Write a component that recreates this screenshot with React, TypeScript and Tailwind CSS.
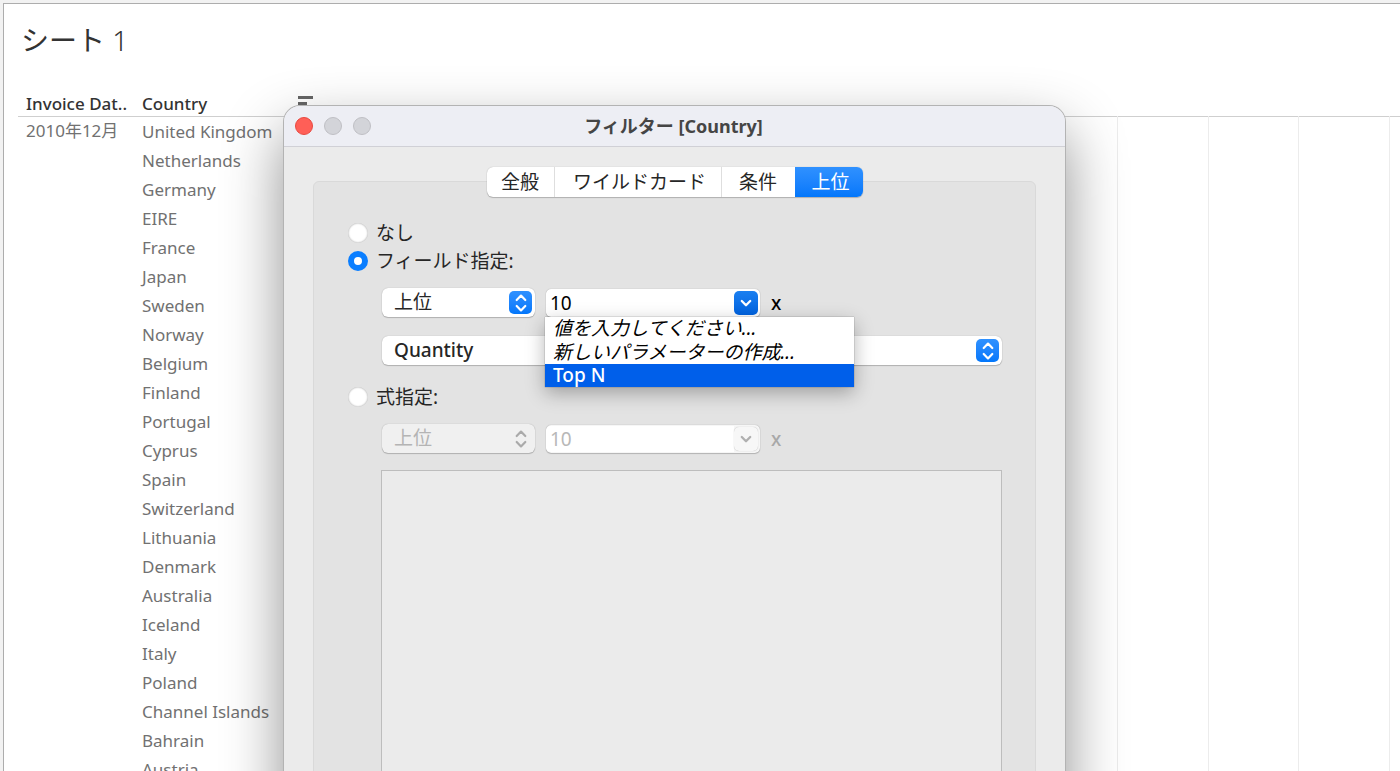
import { useState } from "react";
import type { ReactNode } from "react";
import clsx from "clsx";

const countries = [
  "United Kingdom",
  "Netherlands",
  "Germany",
  "EIRE",
  "France",
  "Japan",
  "Sweden",
  "Norway",
  "Belgium",
  "Finland",
  "Portugal",
  "Cyprus",
  "Spain",
  "Switzerland",
  "Lithuania",
  "Denmark",
  "Australia",
  "Iceland",
  "Italy",
  "Poland",
  "Channel Islands",
  "Bahrain",
  "Austria",
];

const gridColumns = Array.from({ length: 12 }, (_, index) => index);

const tabs = [
  { label: "全般", width: "w-[67px]" },
  { label: "ワイルドカード", width: "w-[167px] pl-1" },
  { label: "条件", width: "w-[74px]" },
  { label: "上位", width: "w-[68px] pl-1" },
];

function SortIcon() {
  return (
    <svg width="15" height="16" viewBox="0 0 15 16" aria-hidden="true">
      <path d="M0 0h15v3H0zM0 6h9v3H0zM0 12h5v3H0z" fill="#666" />
    </svg>
  );
}

function UpDownIcon() {
  return (
    <svg width="14" height="20" viewBox="0 0 14 20" fill="none" stroke="currentColor" strokeWidth="2.2" strokeLinecap="round" strokeLinejoin="round" aria-hidden="true">
      <path d="M2.7 7 7 2.6 11.3 7M2.7 13 7 17.4 11.3 13" />
    </svg>
  );
}

function ChevronIcon() {
  return (
    <svg width="14" height="14" viewBox="0 0 14 14" fill="none" stroke="currentColor" strokeWidth="2.3" strokeLinecap="round" strokeLinejoin="round" aria-hidden="true">
      <path d="M2.8 5 7 9.2 11.2 5" />
    </svg>
  );
}

function PopUp({ label, value, className, disabled = false }: { label: string; value: string; className: string; disabled?: boolean }) {
  return (
    <div className={clsx("relative", className)}>
      <select
        aria-label={label}
        disabled={disabled}
        className={clsx(
          "block h-[29px] w-full appearance-none rounded-md pr-8 pl-3 leading-[29px] opacity-100 shadow-[0_0_1px_rgba(0,0,0,0.3),0_1px_1px_rgba(0,0,0,0.2)]",
          disabled ? "bg-[#f0f0f0] text-[#b4b4b4]" : "bg-white text-[#262626]",
        )}
      >
        <option>{value}</option>
      </select>
      <span
        className={clsx(
          "pointer-events-none absolute top-[3px] right-[3px] flex h-[23px] w-[23px] items-center justify-center rounded-[5px]",
          disabled ? "text-[#aaa]" : "bg-linear-to-b from-[#2f91ff] to-[#0277fb] text-white",
        )}
      >
        <UpDownIcon />
      </span>
    </div>
  );
}

function ComboBox({ label, disabled = false, children }: { label: string; disabled?: boolean; children?: ReactNode }) {
  return (
    <div
      className={clsx(
        "relative mt-px flex h-7 w-[214px] items-center rounded-[5px] pr-[2px] shadow-[0_0_1px_rgba(0,0,0,0.35),0_1px_1px_rgba(0,0,0,0.18)]",
        disabled ? "bg-[#f6f6f6]" : "bg-white",
      )}
    >
      <input
        type="text"
        aria-label={label}
        defaultValue="10"
        disabled={disabled}
        className={clsx("h-[26px] min-w-0 flex-1 rounded-l-[5px] bg-white pl-1 outline-none", disabled ? "text-[#b8b8b8]" : "text-black")}
      />
      <button
        type="button"
        aria-label={`${label}の候補`}
        disabled={disabled}
        className={clsx(
          "flex h-6 w-6 items-center justify-center rounded-[5px]",
          disabled ? "bg-[#f7f7f7] text-[#b0b0b0] shadow-[0_0_1px_rgba(0,0,0,0.3)]" : "bg-linear-to-b from-[#1a7ff0] to-[#0263e0] text-white",
        )}
      >
        <ChevronIcon />
      </button>
      {children}
    </div>
  );
}

function Radio({ label, checked, onSelect }: { label: string; checked: boolean; onSelect: () => void }) {
  return (
    <label className="flex h-7 items-center gap-2">
      <input
        type="radio"
        name="limit"
        checked={checked}
        onChange={onSelect}
        className="h-5 w-5 appearance-none rounded-full bg-white shadow-[inset_0_0_2px_rgba(0,0,0,0.4)] checked:border-[6px] checked:border-[#0a7eff] checked:shadow-none"
      />
      {label}
    </label>
  );
}

function SuggestionMenu() {
  return (
    <ul
      role="listbox"
      aria-label="候補"
      className="absolute top-7 -left-px z-20 w-[309px] bg-white text-black shadow-[0_0_1px_rgba(0,0,0,0.5),0_6px_18px_rgba(0,0,0,0.3)]"
    >
      <li role="option" aria-selected="false" className="h-[23px] pl-2 leading-[23px] italic">
        値を入力してください...
      </li>
      <li role="option" aria-selected="false" className="h-6 pl-2 leading-6 italic">
        新しいパラメーターの作成...
      </li>
      <li role="option" aria-selected="true" className="h-[23px] bg-[#005fea] pl-2 leading-[23px] font-medium text-white">
        Top N
      </li>
    </ul>
  );
}

function FilterDialog() {
  const [tab, setTab] = useState(3);
  const [mode, setMode] = useState("field");

  return (
    <section
      role="dialog"
      aria-labelledby="dialog-title"
      className="absolute top-[106px] left-[284px] flex h-[900px] w-[781px] flex-col rounded-t-2xl bg-[#ebebeb] font-['Noto_Sans','Noto_Sans_CJK_JP',sans-serif] text-[19px] text-[#262626] shadow-[0_0_0_1px_#b3b3b3,0_26px_60px_rgba(0,0,0,0.45)]"
    >
      <header className="flex h-[41px] shrink-0 items-center rounded-t-2xl border-b border-[#d0d0d6] bg-[#edeef4] pr-[13px] pl-[11px]">
        <div className="flex flex-1 gap-[11px]">
          <button type="button" aria-label="閉じる" className="h-[18px] w-[18px] rounded-full border border-[#e8483f] bg-[#ff5f57]" />
          <button type="button" aria-label="最小化" disabled className="h-[18px] w-[18px] rounded-full border border-[#bfbfc4] bg-[#d3d4d9]" />
          <button type="button" aria-label="拡大" disabled className="h-[18px] w-[18px] rounded-full border border-[#bfbfc4] bg-[#d3d4d9]" />
        </div>
        <h2 id="dialog-title" className="pb-px text-lg font-bold text-[#454545]">
          フィルター [Country]
        </h2>
        <div className="flex-1" />
      </header>

      <div className="flex flex-1 flex-col px-[29px] pt-5">
        <div role="tablist" className="relative z-10 -mb-4 flex h-[30px] self-center overflow-hidden rounded-md bg-white shadow-[0_0_1px_rgba(0,0,0,0.3),0_1px_1px_rgba(0,0,0,0.2)]">
          {tabs.map((item, index) => (
            <button
              key={item.label}
              type="button"
              role="tab"
              aria-selected={tab === index}
              onClick={() => setTab(index)}
              className={clsx(
                "h-full",
                item.width,
                index > 0 && index !== tab && "border-l border-[#dedede]",
                tab === index && "bg-linear-to-b from-[#2f91ff] to-[#0277fb] text-white",
              )}
            >
              {item.label}
            </button>
          ))}
        </div>

        <div role="tabpanel" className="flex flex-1 flex-col rounded-t-md border border-[#d9d9d9] bg-[#e3e3e3] pt-[37px] pr-[33px] pl-[34px]">
          <Radio label="なし" checked={mode === "none"} onSelect={() => setMode("none")} />
          <Radio label="フィールド指定:" checked={mode === "field"} onSelect={() => setMode("field")} />

          <div className="mt-[13px] flex flex-col gap-[18px] pl-[34px]">
            <div className="flex">
              <PopUp label="方向" value="上位" className="mr-[11px] w-[153px]" />
              <ComboBox label="件数">
                <SuggestionMenu />
              </ComboBox>
              <span className="ml-[11px] leading-[30px] font-medium text-black">x</span>
            </div>
            <PopUp label="フィールド" value="Quantity" className="w-full font-medium" />
          </div>

          <div className="mt-[18px]">
            <Radio label="式指定:" checked={mode === "formula"} onSelect={() => setMode("formula")} />
          </div>

          <div className="mt-[13px] flex flex-1 flex-col gap-4 pl-[34px]">
            <div className="flex">
              <PopUp label="式の方向" value="上位" disabled className="mr-[11px] w-[153px]" />
              <ComboBox label="式の件数" disabled />
              <span className="ml-[11px] leading-[30px] font-medium text-[#a8a8a8]">x</span>
            </div>
            <textarea aria-label="式" disabled className="-ml-px flex-1 resize-none border border-[#bdbdbd] bg-[#ebebeb]" />
          </div>
        </div>
      </div>
    </section>
  );
}

export default function App() {
  return (
    <div className="relative h-screen overflow-hidden bg-[#f2f2f2] pt-[3px] pl-[3px]">
      <main className="h-full border-t border-l border-[#adadad] bg-white pl-[14px] font-['Noto_Sans','Noto_Sans_CJK_JP',sans-serif]">
        <h1 className="pt-4 pl-[3px] text-[28px] leading-10 text-[#333]">
          シート <span className="font-light">1</span>
        </h1>
        <table className="mt-8 w-full table-fixed border-collapse text-left text-[17px] text-[#717171]">
          <colgroup>
            <col className="w-[116px]" />
            <col className="w-[169px]" />
            {gridColumns.map((column) => (
              <col key={column} />
            ))}
            <col className="w-[11px]" />
          </colgroup>
          <thead>
            <tr className="h-6 border-b border-[#cfcfcf] text-[#333]">
              <th scope="col" className="p-0 pl-2 leading-5 font-medium whitespace-nowrap">
                Invoice Dat..
              </th>
              <th scope="col" className="p-0 pl-2 leading-5 font-medium">
                <div className="flex items-center justify-between">
                  Country
                  <button type="button" aria-label="並べ替え" className="-mr-[10px]">
                    <SortIcon />
                  </button>
                </div>
              </th>
              <td colSpan={13} />
            </tr>
          </thead>
          <tbody>
            {countries.map((country, row) => (
              <tr key={country} className="h-[29px]">
                {row === 0 && (
                  <th scope="rowgroup" rowSpan={countries.length} className="p-0 pl-2 align-top leading-[27px] font-normal whitespace-nowrap">
                    2010年12月
                  </th>
                )}
                <th scope="row" className="p-0 pl-2 leading-[29px] font-normal whitespace-nowrap">
                  {country}
                </th>
                {row === 0 &&
                  gridColumns.map((column) => <td key={column} rowSpan={countries.length} className="border-r border-[#ececec] p-0" />)}
                {row === 0 && <td rowSpan={countries.length} className="p-0" />}
              </tr>
            ))}
          </tbody>
        </table>
      </main>
      <FilterDialog />
    </div>
  );
}
